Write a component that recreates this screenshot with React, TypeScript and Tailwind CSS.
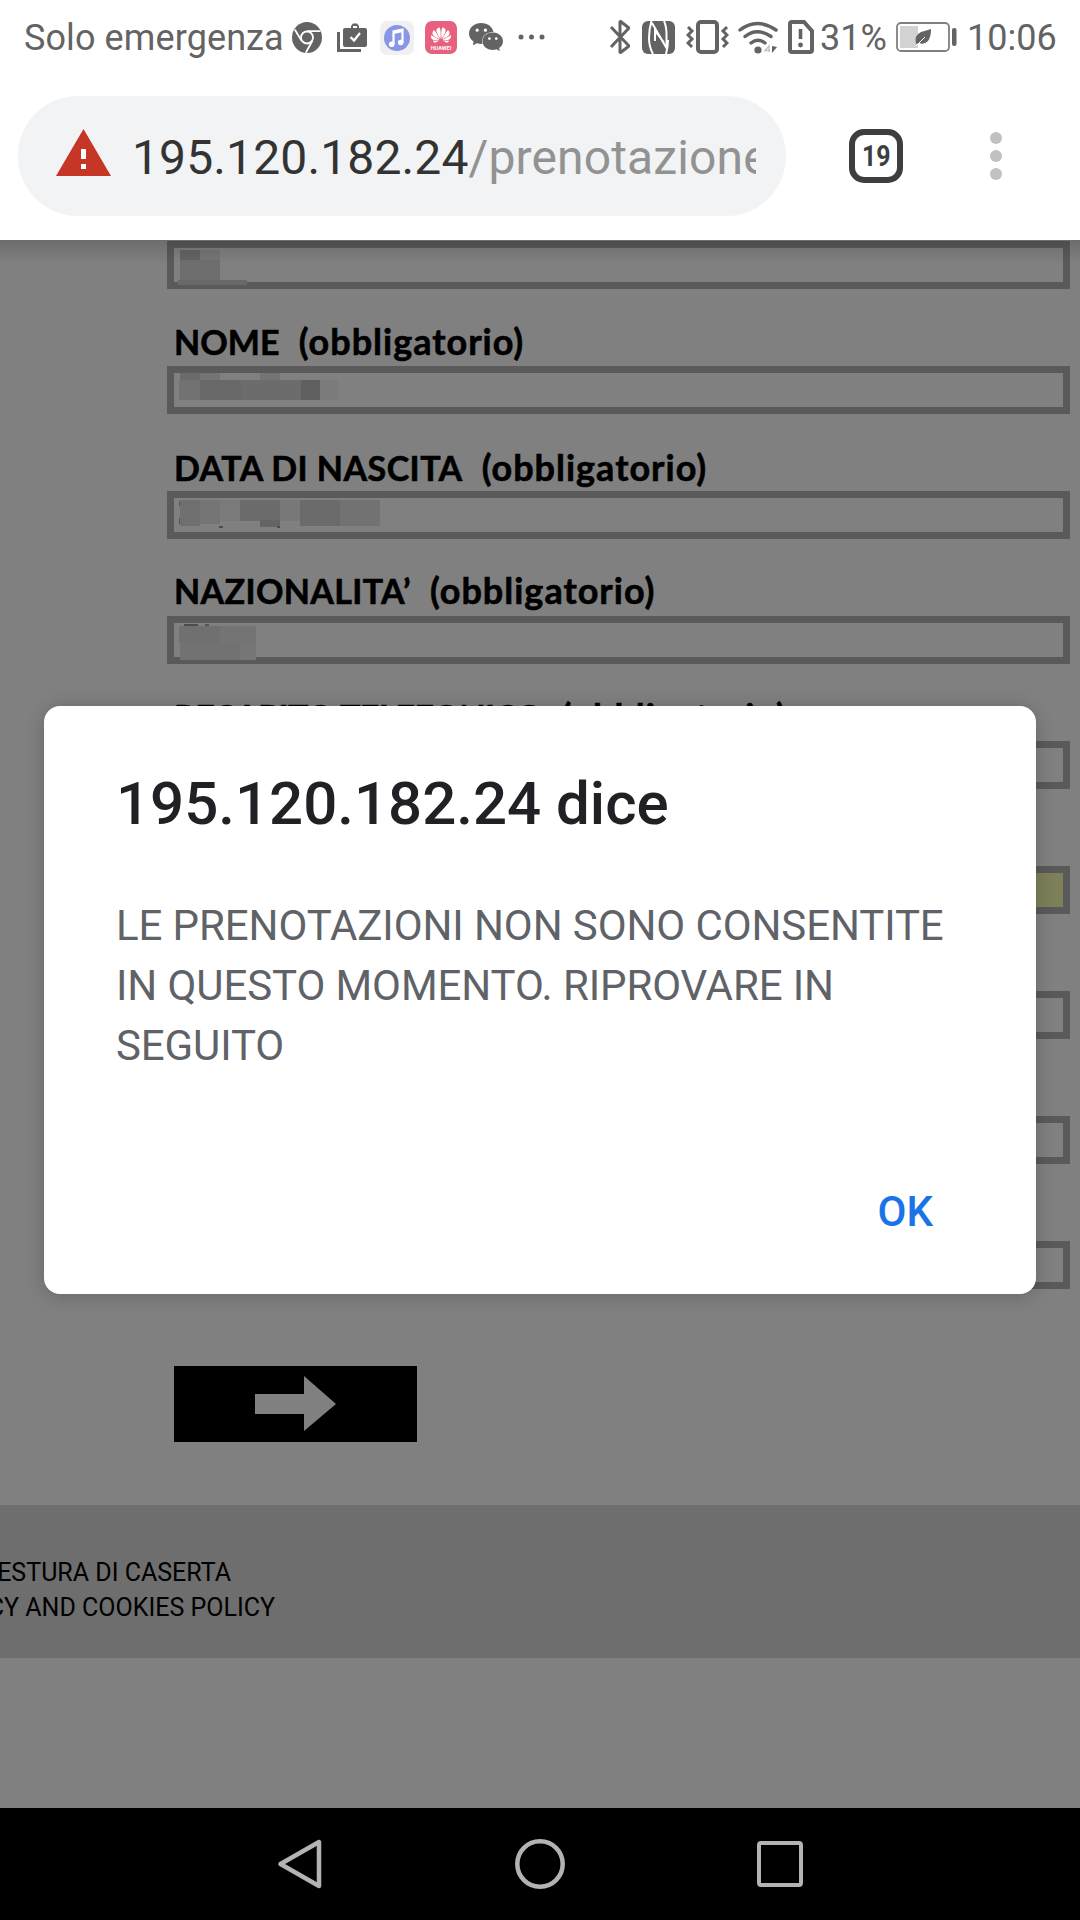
import type { ReactNode } from 'react';
import { SiHuawei, SiWechat } from 'react-icons/si';

interface Patch {
  x: number;
  y: number;
  w: number;
  h: number;
  color: string;
}

interface Field {
  label?: string;
  labelClass?: string;
  highlighted?: boolean;
  patches: Patch[];
}

// patches are the pixelated blocks that hide the personal data
const fields: Field[] = [
  {
    patches: [
      { x: 6, y: 2, w: 20, h: 10, color: '#646464' },
      { x: 26, y: 2, w: 20, h: 10, color: '#767676' },
      { x: 6, y: 12, w: 40, h: 22, color: '#6e6e6e' },
      { x: 4, y: 32, w: 69, h: 5, color: '#696969' },
    ],
  },
  {
    label: 'NOME',
    labelClass: 'pt-[32px] tracking-[0.1px]',
    patches: [
      { x: 6, y: 0, w: 20, h: 7, color: '#6b6b6b' },
      { x: 26, y: 0, w: 20, h: 7, color: '#747474' },
      { x: 86, y: 0, w: 20, h: 7, color: '#747474' },
      { x: 5, y: 7, w: 21, h: 20, color: '#727272' },
      { x: 26, y: 7, w: 41, h: 20, color: '#686868' },
      { x: 67, y: 7, w: 60, h: 20, color: '#6c6c6c' },
      { x: 127, y: 7, w: 19, h: 20, color: '#606060' },
      { x: 146, y: 7, w: 18, h: 20, color: '#7b7b7b' },
    ],
  },
  {
    label: 'DATA DI NASCITA',
    labelClass: 'pt-[33px] tracking-[0.45px]',
    patches: [
      { x: 5, y: 3, w: 2, h: 5, color: '#555555' },
      { x: 5, y: 20, w: 2, h: 6, color: '#555555' },
      { x: 6, y: 2, w: 20, h: 26, color: '#6f6f6f' },
      { x: 26, y: 2, w: 20, h: 24, color: '#757575' },
      { x: 46, y: 2, w: 20, h: 21, color: '#7a7a7a' },
      { x: 66, y: 2, w: 40, h: 21, color: '#6c6c6c' },
      { x: 86, y: 22, w: 20, h: 7, color: '#646464' },
      { x: 106, y: 2, w: 20, h: 21, color: '#787878' },
      { x: 126, y: 2, w: 40, h: 26, color: '#6b6b6b' },
      { x: 166, y: 2, w: 40, h: 26, color: '#727272' },
      { x: 45, y: 28, w: 4, h: 2, color: '#4c4c4c' },
      { x: 103, y: 28, w: 3, h: 2, color: '#4c4c4c' },
    ],
  },
  {
    label: 'NAZIONALITA’',
    labelClass: 'pt-[31px] tracking-[0.35px]',
    patches: [
      { x: 10, y: 1, w: 14, h: 2, color: '#4c4c4c' },
      { x: 31, y: 1, w: 4, h: 2, color: '#555555' },
      { x: 5, y: 3, w: 41, h: 16, color: '#707070' },
      { x: 46, y: 3, w: 36, h: 16, color: '#747474' },
      { x: 6, y: 19, w: 60, h: 18, color: '#727272' },
      { x: 66, y: 19, w: 16, h: 18, color: '#767676' },
    ],
  },
  { label: 'RECAPITO TELEFONICO', labelClass: 'pt-[32px] tracking-[-0.7px]', patches: [] },
  { highlighted: true, patches: [] },
  { patches: [] },
  { patches: [] },
  { patches: [] },
];

function Icon({ className, viewBox, children }: { className: string; viewBox: string; children: ReactNode }) {
  return (
    <svg className={`block shrink-0 ${className}`} viewBox={viewBox} fill="none">
      {children}
    </svg>
  );
}

function StatusBar() {
  return (
    <div className="flex h-[76px] items-center whitespace-nowrap pl-6 text-[36px] leading-[76px] text-[#636363]">
      <span className="w-[268px] tracking-[0.1px]">Solo emergenza</span>
      <Icon className="mt-[-2px] h-[31px] w-[30px]" viewBox="0 0 30 31">
        <ellipse cx="15" cy="15.5" rx="15" ry="15.5" fill="#636363" />
        <circle cx="15" cy="15.5" r="6" stroke="#fff" strokeWidth="1.8" />
        <path d="M15 9.2h13.5M9.4 18.6 2.8 7.5M20.4 18.8 13.8 30.8" stroke="#fff" strokeWidth="1.8" />
      </Icon>
      <Icon className="ml-[15px] h-[30px] w-[30px]" viewBox="0 0 30 30">
        <path d="M1.5 9v18.5H24" stroke="#636363" strokeWidth="3" />
        <path d="M8 5h6V3l2-2.500h4L22 3v2h6q2 0 2 2v15q0 2-2 2H8q-2 0-2-2V7q0-2 2-2Zm8 0h4V3h-4Z" fill="#636363" fillRule="evenodd" />
        <path d="m13.500 14 3.500 3.500 6-7.500" stroke="#fff" strokeWidth="2.2" />
      </Icon>
      <Icon className="ml-[13px] h-[34px] w-[34px]" viewBox="0 0 34 34">
        <rect width="34" height="34" rx="7" fill="#f0f0f3" />
        <circle cx="17" cy="17" r="13" fill="#8796e6" />
        <path d="M13.5 23V10.5l9-2V21" stroke="#fff" strokeWidth="2.2" />
        <path d="m13.5 11.5 9-2" stroke="#fff" strokeWidth="3" />
        <circle cx="11.7" cy="23.3" r="2.8" fill="#fff" />
        <circle cx="20.7" cy="21.5" r="2.8" fill="#fff" />
      </Icon>
      <div className="ml-[11px] mt-[-2px] flex h-[33px] w-[32px] flex-col items-center rounded-[7px] bg-[#e8607f] pt-[4px] text-white">
        <SiHuawei className="h-[20px] w-[22px]" />
        <span className="text-[5.5px] font-bold leading-[6px]">HUAWEI</span>
      </div>
      <SiWechat className="ml-[12px] mt-[-2px] h-[34px] w-[34px] shrink-0" />
      <Icon className="ml-[15px] mt-[-3px] h-[6px] w-[28px]" viewBox="0 0 28 6">
        <circle cx="3" cy="3" r="2.5" fill="#636363" />
        <circle cx="13.5" cy="3" r="2.5" fill="#636363" />
        <circle cx="24" cy="3" r="2.5" fill="#636363" />
      </Icon>
      <Icon className="ml-[63px] mt-[-2px] h-[36px] w-[23px]" viewBox="0 0 23 36">
        <path d="m2 8 18 19-9 7V2l9 7L2 28" stroke="#636363" strokeWidth="3" strokeLinejoin="bevel" />
      </Icon>
      <Icon className="ml-[10px] mt-[-2px] h-[33px] w-[33px]" viewBox="0 0 33 33">
        <rect width="33" height="33" rx="6" fill="#636363" />
        <path
          d="M9.500 0Q7 8 7 17t4 16M10 2l14.500 25V14q0-9-2.500-14M24 33q2-7 2-14M22 21.500 13 10v10"
          stroke="#fff"
          strokeWidth="2"
        />
      </Icon>
      <Icon className="ml-[11px] mt-[-2px] h-[34px] w-[43px]" viewBox="0 0 43 34">
        <rect x="12" y="2" width="19" height="30" rx="3" stroke="#636363" strokeWidth="4" />
        <path d="m2 7 4 4-4 4 4 4-4 4 4 4M41 7l-4 4 4 4-4 4 4 4-4 4" stroke="#636363" strokeWidth="3" />
      </Icon>
      <Icon className="ml-[9px] mt-[-2px] h-[33px] w-[42px]" viewBox="0 0 42 33">
        <path d="M2 9Q19-4 38 9M7 15.500Q19 6 33 15.500M13 22q7-5.500 14 0" stroke="#636363" strokeWidth="3.4" strokeLinecap="round" />
        <circle cx="20" cy="29" r="3.600" fill="#636363" />
        <path d="M31 31v-6l-4 4.500h5" stroke="#c4c4c4" strokeWidth="1.500" />
        <path d="M34 25v7l5-6" fill="#636363" />
      </Icon>
      <Icon className="ml-[8px] mt-[-2px] h-[34px] w-[26px]" viewBox="0 0 26 34">
        <path d="M4 2h12l8 9v19q0 2-2 2H4q-2 0-2-2V4q0-2 2-2Z" stroke="#636363" strokeWidth="4" />
        <path d="M12.500 9v10" stroke="#636363" strokeWidth="3.600" />
        <circle cx="12.500" cy="25" r="2.400" fill="#636363" />
      </Icon>
      <span className="ml-[6px] w-[76px]">31%</span>
      <Icon className="mt-[-3px] h-[30px] w-[62px]" viewBox="0 0 62 30">
        <rect x="1" y="1" width="52" height="28" rx="4" stroke="#808080" strokeWidth="1.800" />
        <rect x="4" y="4" width="18" height="22" fill="#d2d2d2" />
        <rect x="56" y="6" width="4.500" height="18" rx="2" fill="#636363" />
        <path d="M20 22q-2-9 5-12 4-1 10-3 0 8-3 12-4 4-9 2Z" fill="#636363" />
        <path d="m20 24 9-9" stroke="#fff" strokeWidth="1" />
      </Icon>
      <span className="ml-[9px]">10:06</span>
    </div>
  );
}

function Toolbar() {
  return (
    <div className="flex h-[164px] items-start pl-[18px] pt-5">
      <div className="flex h-[120px] w-[768px] items-center rounded-full bg-[#f1f3f4] pl-[38px]">
        <Icon className="mt-[-7px] h-[47px] w-[55px]" viewBox="0 0 55 47">
          <path d="M27.500 0 55 47H0Z" fill="#c53627" />
          <path d="M25 20h5v10h-5zM25 35h5v5h-5z" fill="#fff" />
        </Icon>
        <div className="ml-[21px] mt-[3px] w-[624px] overflow-hidden whitespace-nowrap text-[48px] leading-[60px] tracking-[0.13px] text-[#333]">
          195.120.182.24<span className="text-[#929292]">/prenotazione</span>
        </div>
      </div>
      <div className="ml-[63px] mt-[33px] flex h-[54px] w-[54px] items-center justify-center rounded-[15px] border-6 border-[#3c3e40] text-[30px] font-bold leading-none text-[#3c3e40]">
        <span className="scale-x-[0.83]">19</span>
      </div>
      <div className="ml-[87px] mt-9 flex flex-col gap-[6px]">
        <span className="size-3 rounded-full bg-[#c1c1c1]" />
        <span className="size-3 rounded-full bg-[#c1c1c1]" />
        <span className="size-3 rounded-full bg-[#c1c1c1]" />
      </div>
    </div>
  );
}

function FormField({ field }: { field: Field }) {
  return (
    <div className="h-[125px]">
      <div
        className={`flex h-[77px] items-baseline whitespace-nowrap pl-[7px] font-[Lato,sans-serif] text-[34px] font-bold leading-[40px] text-black [-webkit-text-stroke:0.6px_black] ${field.labelClass ?? ''}`}
      >
        {field.label && (
          <>
            <span>{field.label}</span>
            <span className="ml-[19px] text-[36px] tracking-[1px]">(obbligatorio)</span>
          </>
        )}
      </div>
      <div
        className={`relative h-12 w-[903px] border-[7px] border-[#5a5a5a] ${
          field.highlighted ? 'bg-[#7d8059]' : 'bg-[#808080]'
        }`}
      >
        {field.patches.map((p, i) => (
          <span
            key={i}
            className="absolute"
            style={{ left: p.x, top: p.y, width: p.w, height: p.h, backgroundColor: p.color }}
          />
        ))}
      </div>
    </div>
  );
}

function AlertDialog() {
  return (
    <div className="absolute left-[44px] top-[466px] flex h-[588px] w-[992px] flex-col rounded-[16px] bg-white px-[72px] shadow-[0_2px_20px_rgba(0,0,0,0.2)]">
      <h2 className="mt-[62px] text-[60px] font-medium leading-[72px] text-[#202124]">195.120.182.24 dice</h2>
      <p className="mt-[56px] w-[850px] text-[42px] leading-[60px] tracking-[-0.1px] text-[#5f6368]">
        LE PRENOTAZIONI NON SONO CONSENTITE
        <br />
        IN QUESTO MOMENTO. RIPROVARE IN
        <br />
        SEGUITO
      </p>
      <button className="mr-[31px] mt-[106px] self-end text-[42px] font-medium leading-[60px] text-[#1a73e8]">OK</button>
    </div>
  );
}

export default function App() {
  return (
    <div className="flex h-[1920px] w-[1080px] flex-col overflow-hidden bg-white font-[Roboto,sans-serif]">
      <StatusBar />
      <Toolbar />
      <main className="relative h-[1568px] overflow-hidden bg-[#808080]">
        <div className="mt-[-76px] pl-[167px]">
          {fields.map((field, i) => (
            <FormField key={i} field={field} />
          ))}
        </div>
        <div className="ml-[174px] mt-[77px] flex h-[76px] w-[243px] justify-center bg-black pt-[10px]">
          <Icon className="h-[56px] w-[81px]" viewBox="0 0 81 56">
            <path d="M0 18h49V0l32 28-32 27V38H0Z" fill="#808080" />
          </Icon>
        </div>
        <footer className="mt-[63px] h-[153px] whitespace-nowrap bg-[#6e6e6e] pt-[50px] text-[25px] leading-[35px] text-black">
          <p className="flex w-[231px] justify-end">QUESTURA DI CASERTA</p>
          <p className="flex w-[275px] justify-end">PRIVACY AND COOKIES POLICY</p>
        </footer>
        <div className="absolute inset-x-0 top-0 h-6 bg-linear-to-b from-black/15 to-transparent" />
        <AlertDialog />
      </main>
      <nav className="flex h-[112px] items-center bg-black pl-[277px]">
        <Icon className="h-[52px] w-[46px]" viewBox="0 0 46 52">
          <path d="M42 4v44L3.500 26Z" stroke="#b3b3b3" strokeWidth="4.500" strokeLinejoin="round" />
        </Icon>
        <Icon className="ml-[191px] h-[52px] w-[52px]" viewBox="0 0 52 52">
          <circle cx="26" cy="26" r="22.700" stroke="#b3b3b3" strokeWidth="4.500" />
        </Icon>
        <div className="ml-[191px] h-[46px] w-[46px] rounded-[4px] border-[4px] border-[#b3b3b3]" />
      </nav>
    </div>
  );
}
